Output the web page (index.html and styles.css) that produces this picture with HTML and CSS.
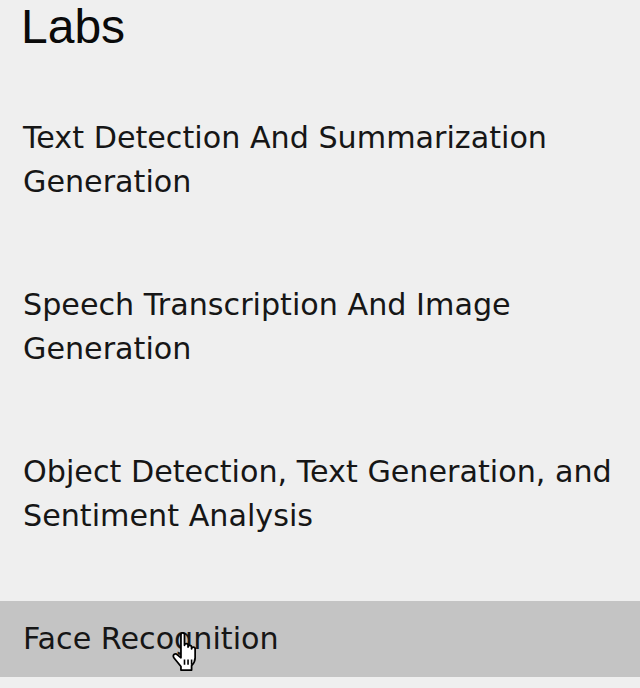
FILE: index.html
```
<!DOCTYPE html>
<html lang="en">
<head>
<meta charset="utf-8">
<title>Labs</title>
<link rel="stylesheet" href="styles.css">
</head>
<body>
<nav class="sidebar">
  <h1 class="title">Labs</h1>
  <ul class="labs">
    <li class="lab">Text Detection And Summarization Generation</li>
    <li class="lab">Speech Transcription And Image Generation</li>
    <li class="lab">Object Detection, Text Generation, and Sentiment Analysis</li>
    <li class="lab lab-hover">Face Recognition
      <svg class="cursor" viewBox="1 -0.5 14 22" width="25" height="39" aria-hidden="true">
        <path d="M6,1 C6,0.4 6.5,0 7,0 C7.5,0 8,0.4 8,1 V7 C8,6.4 8.5,6 9,6 C9.5,6 10,6.4 10,7 V8 C10,7.4 10.5,7 11,7 C11.5,7 12,7.4 12,8 V9 C12,8.4 12.5,8 13,8 C13.5,8 14,8.4 14,9 V14 C14,16 13,17.5 12,18.5 V21 H6 V19 L2,14 C1.5,13.4 1.6,12.5 2.2,12.1 C2.8,11.7 3.5,11.9 4,12.4 L6,14 Z" fill="#fff" stroke="#000" stroke-width="1" stroke-linejoin="round"/>
        <path d="M8,15 V18 M10,15 V18 M12,15 V18" stroke="#000" stroke-width="0.9"/>
      </svg>
    </li>
  </ul>
</nav>
</body>
</html>
```
FILE: styles.css
```
html, body {
  margin: 0;
  padding: 0;
  background: #efefef;
}

.sidebar {
  width: 640px;
  display: flex;
  flex-direction: column;
  gap: 47px;
}

.title {
  margin: 0;
  padding-left: 21px;
  font-family: "Liberation Sans", Arial, sans-serif;
  font-weight: normal;
  font-size: 48px;
  line-height: 53px;
  color: #0a0a0a;
}

.labs {
  list-style: none;
  margin: 0;
  padding: 0;
  display: flex;
  flex-direction: column;
  gap: 47px;
}

.lab {
  padding: 16px 23px;
  font-family: "DejaVu Sans", Verdana, sans-serif;
  font-size: 30.2px;
  line-height: 44px;
  color: #161616;
}

.lab-hover {
  position: relative;
  background: #c4c4c4;
}

.cursor {
  position: absolute;
  left: 172px;
  top: 31px;
}
```
